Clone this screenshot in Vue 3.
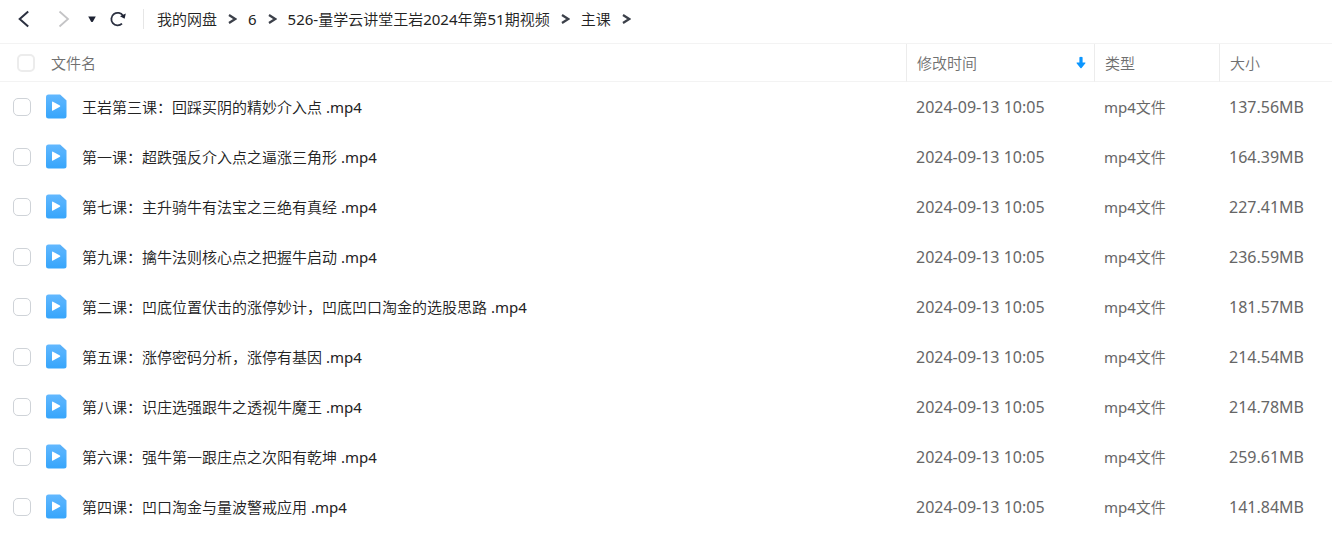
<script setup>
import { ref } from 'vue'

const crumbs = ['我的网盘', '6', '526-量学云讲堂王岩2024年第51期视频', '主课']

const files = ref([
  { name: '王岩第三课：回踩买阴的精妙介入点 .mp4', size: '137.56MB' },
  { name: '第一课：超跌强反介入点之逼涨三角形 .mp4', size: '164.39MB' },
  { name: '第七课：主升骑牛有法宝之三绝有真经 .mp4', size: '227.41MB' },
  { name: '第九课：擒牛法则核心点之把握牛启动 .mp4', size: '236.59MB' },
  { name: '第二课：凹底位置伏击的涨停妙计，凹底凹口淘金的选股思路 .mp4', size: '181.57MB' },
  { name: '第五课：涨停密码分析，涨停有基因 .mp4', size: '214.54MB' },
  { name: '第八课：识庄选强跟牛之透视牛魔王 .mp4', size: '214.78MB' },
  { name: '第六课：强牛第一跟庄点之次阳有乾坤 .mp4', size: '259.61MB' },
  { name: '第四课：凹口淘金与量波警戒应用 .mp4', size: '141.84MB' },
].map((f) => ({ ...f, time: '2024-09-13 10:05', type: 'mp4文件', checked: false })))

function toggleAll(e) {
  files.value.forEach((f) => { f.checked = e.target.checked })
}
</script>

<template>
  <main class="drive">
    <svg class="defs" aria-hidden="true">
      <defs>
        <linearGradient id="fileFill" x1="0" y1="0" x2="0" y2="1">
          <stop offset="0" stop-color="#62b8ff" />
          <stop offset="1" stop-color="#36a5fb" />
        </linearGradient>
      </defs>
    </svg>
    <header class="toolbar">
      <button class="tool back" type="button" aria-label="后退">
        <svg width="12" height="20" viewBox="0 0 12 20"><path d="M10.200 2.500 1.700 10l8.500 7.500" fill="none" stroke="#2b3040" stroke-width="2" /></svg>
      </button>
      <button class="tool forward" type="button" aria-label="前进">
        <svg width="12" height="20" viewBox="0 0 12 20"><path d="M1.500 2.500 10 10l-8.500 7.500" fill="none" stroke="#c4c4c6" stroke-width="1.8" /></svg>
      </button>
      <button class="tool history" type="button" aria-label="历史">
        <svg width="8" height="8" viewBox="0 0 8 8"><path d="M.2 1.500h7.600L5 6.500q-1 1.200-2 0z" fill="#1d2233" /></svg>
      </button>
      <button class="tool refresh" type="button" aria-label="刷新">
        <svg width="18" height="18" viewBox="0 0 18 18">
          <path d="M13 13.700A6.300 6.300 0 1 1 14 5.800" fill="none" stroke="#2b3040" stroke-width="1.8" />
          <path d="M16.800 3.500 15.600 8.700 11 6.200z" fill="#1d2233" />
        </svg>
      </button>
      <nav class="crumbs" aria-label="路径">
        <template v-for="crumb in crumbs" :key="crumb">
          <a href="#">{{ crumb }}</a>
          <svg class="sep" width="9" height="12" viewBox="0 0 9 12"><path d="M1 2 7.200 6 1 10" fill="none" stroke="#3c404a" stroke-width="2.2" /></svg>
        </template>
      </nav>
    </header>

    <table>
      <colgroup>
        <col />
        <col class="w-time" />
        <col class="w-type" />
        <col class="w-size" />
      </colgroup>
      <thead>
        <tr>
          <th scope="col">
            <div class="name head">
              <input id="all" type="checkbox" @change="toggleAll" />
              <label for="all">文件名</label>
            </div>
          </th>
          <th scope="col">
            <div class="sort">
              修改时间
              <svg width="10" height="13" viewBox="0 0 10 13"><path d="M3.400 1.200q1.600-1 3.200 0v5.400h2.600q.6.3 0 1L5.600 12q-.6.5-1.200 0L.8 7.600q-.6-.7 0-1h2.600z" fill="#0b96ff" /></svg>
            </div>
          </th>
          <th scope="col">类型</th>
          <th scope="col">大小</th>
        </tr>
      </thead>
      <tbody>
        <tr v-for="(file, i) in files" :key="file.name">
          <td>
            <div class="name">
              <input :id="`file-${i}`" v-model="file.checked" type="checkbox" />
              <svg class="icon" width="21" height="26" viewBox="0 0 21 26">
                <path d="M2.500.5H14L20.500 6.500V22q0 2.500-2.500 2.500H2.500Q0 24.500 0 22V3Q0 .5 2.500.5z" fill="url(#fileFill)" />
                <path d="M14 .5 20.500 6.500H16q-2 0-2-2z" fill="#4fa9f2" opacity=".35" />
                <path d="M6 8.400q0-1.200 1-.7l6.900 3.900q.8.600 0 1.200L7 16.600q-1 .5-1-.7z" fill="#fff" />
              </svg>
              <label :for="`file-${i}`">{{ file.name }}</label>
            </div>
          </td>
          <td class="figure">{{ file.time }}</td>
          <td>{{ file.type }}</td>
          <td class="figure">{{ file.size }}</td>
        </tr>
      </tbody>
    </table>
  </main>
</template>

<style>
body {
  margin: 0;
  background: #fff;
}
</style>

<style scoped>
.drive {
  font: 15px/20px "Noto Sans", "Noto Sans CJK SC DemiLight", "Noto Sans CJK SC Light", "Noto Sans CJK SC", sans-serif;
  color: #222;
}

.defs {
  position: absolute;
  width: 0;
  height: 0;
}

.toolbar {
  display: flex;
  align-items: center;
  height: 37px;
  padding: 0 18px 6px;
  border-bottom: 1px solid #f3f3f3;
}

.tool {
  display: flex;
  padding: 0;
  border: 0;
  background: none;
  cursor: pointer;
}

.forward {
  margin-left: 28px;
}

.history {
  margin-left: 18px;
}

.refresh {
  margin-left: 13px;
}

.crumbs {
  display: flex;
  align-items: center;
  gap: 11px;
  height: 20px;
  margin-left: 16px;
  padding-left: 13px;
  border-left: 1px solid #e6e6e6;
  white-space: nowrap;
}

.crumbs a {
  color: inherit;
  text-decoration: none;
}

table {
  width: 100%;
  table-layout: fixed;
  border-collapse: separate;
  border-spacing: 0;
}

.w-time {
  width: 188px;
}

.w-type {
  width: 125px;
}

.w-size {
  width: 113px;
}

th {
  height: 37px;
  padding: 0 0 0 10px;
  border-bottom: 1px solid #f3f3f3;
  font-weight: inherit;
  text-align: left;
  color: #707070;
}

th + th {
  border-left: 1px solid #ececec;
}

td {
  height: 50px;
  padding: 0 0 0 10px;
  color: #666;
  white-space: nowrap;
}

.figure {
  font-size: 16px;
}

th:first-child,
td:first-child {
  padding-left: 13px;
}

.name {
  display: flex;
  align-items: center;
  color: #222;
}

.head {
  gap: 16px;
  padding-left: 4px;
  color: #707070;
}

.sort {
  display: flex;
  align-items: center;
  justify-content: space-between;
  padding-right: 8px;
}

input {
  appearance: none;
  flex: none;
  box-sizing: border-box;
  width: 18px;
  height: 18px;
  margin: 0;
  border: 1px solid #cfd3d8;
  border-radius: 5px;
  background: #fff;
}

.head input {
  border: 2px solid #ececec;
}

input:checked {
  border-color: #36a5fb;
  background: #36a5fb;
}

.icon {
  flex: none;
  margin: 0 15px;
}
</style>
